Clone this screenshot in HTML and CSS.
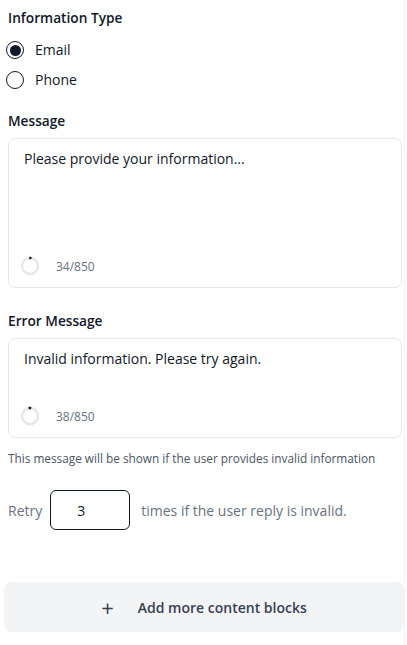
FILE: index.html
```html
<!DOCTYPE html>
<html>
<head>
<meta charset="utf-8">
<link rel="stylesheet" href="styles.css">
</head>
<body>
<div class="panel">
  <section class="group">
    <h3 class="label">Information Type</h3>
    <div class="radios">
      <label class="radio"><span class="dot checked"></span><span>Email</span></label>
      <label class="radio"><span class="dot"></span><span>Phone</span></label>
    </div>
  </section>

  <section class="group msg">
    <h3 class="label">Message</h3>
    <div class="box tall">
      <div class="text">Please provide your information...</div>
      <div class="counter">
        <svg class="ring" width="20" height="20" viewBox="0 0 20 20">
          <circle cx="10" cy="10" r="8" fill="none" stroke="#e5e7eb" stroke-width="2.4"/>
          <circle cx="10" cy="10" r="8" fill="none" stroke="#111827" stroke-width="2.4" stroke-dasharray="2.2 60" transform="rotate(-95 10 10)"/>
        </svg>
        <span>34/850</span>
      </div>
    </div>
  </section>

  <section class="group err">
    <h3 class="label">Error Message</h3>
    <div class="box short">
      <div class="text">Invalid information. Please try again.</div>
      <div class="counter">
        <svg class="ring" width="20" height="20" viewBox="0 0 20 20">
          <circle cx="10" cy="10" r="8" fill="none" stroke="#e5e7eb" stroke-width="2.4"/>
          <circle cx="10" cy="10" r="8" fill="none" stroke="#111827" stroke-width="2.4" stroke-dasharray="2.6 60" transform="rotate(-100 10 10)"/>
        </svg>
        <span>38/850</span>
      </div>
    </div>
    <p class="help">This message will be shown if the user provides invalid information</p>
  </section>

  <div class="retry">
    <span>Retry</span>
    <div class="num">3</div>
    <span>times if the user reply is invalid.</span>
  </div>

  <button class="add"><span class="plus">+</span><span>Add more content blocks</span></button>
</div>
</body>
</html>
```

FILE: styles.css
```css
html, body {
  margin: 0;
  padding: 0;
  background: #ffffff;
}
body {
  font-family: "Open Sans", "Liberation Sans", Arial, sans-serif;
  font-size: 14px;
  color: #111827;
}
.panel {
  width: 404px;
  height: 645px;
  border-right: 1px solid #f1f2f4;
  box-sizing: content-box;
  padding-top: 9px;
}
.group {
  padding: 0 2px 0 8px;
}
.label {
  margin: 0;
  font-size: 13.7px;
  font-weight: 600;
  line-height: 18px;
  color: #111827;
}
.radios {
  display: flex;
  flex-direction: column;
  gap: 12px;
  margin-top: 14px;
  margin-left: -2px;
}
.radio {
  display: flex;
  align-items: center;
  gap: 11px;
  height: 18px;
  line-height: 18px;
}
.dot {
  width: 16px;
  height: 16px;
  border: 1.25px solid #111827;
  border-radius: 50%;
  box-sizing: content-box;
  display: flex;
  align-items: center;
  justify-content: center;
}
.dot.checked::after {
  content: "";
  width: 11px;
  height: 11px;
  border-radius: 50%;
  background: #111827;
}
.msg { margin-top: 23px; }
.box {
  margin-top: 8px;
  border: 1px solid #e5e7eb;
  border-radius: 7px;
  padding: 10px 15px 11px 15px;
  box-sizing: border-box;
  display: flex;
  flex-direction: column;
  justify-content: space-between;
}
.box.tall { height: 150px; }
.box.short { height: 100px; }
.text {
  line-height: 20px;
  color: #111827;
}
.counter {
  display: flex;
  align-items: center;
  gap: 16px;
  margin-left: -4px;
  font-size: 12px;
  color: #6b7280;
}
.ring { display: block; }
.err { margin-top: 24px; }
.help {
  margin: 12px 0 0;
  font-size: 11.8px;
  line-height: 16px;
  color: #4b5563;
}
.retry {
  display: flex;
  align-items: center;
  margin-top: 24px;
  padding-left: 8px;
  color: #6b7280;
  font-size: 14px;
}
.num {
  width: 80px;
  height: 40px;
  box-sizing: border-box;
  border: 1px solid #111827;
  border-radius: 6px;
  margin: 0 11px 0 8px;
  padding-left: 26px;
  display: flex;
  align-items: center;
  color: #111827;
}
.add {
  margin: 52px 0 0 4px;
  width: 400px;
  height: 50px;
  border: none;
  border-radius: 8px;
  background: #f3f4f6;
  display: flex;
  align-items: center;
  justify-content: center;
  gap: 24px;
  font-family: "Open Sans", "Liberation Sans", Arial, sans-serif;
  font-size: 14px;
  font-weight: 600;
  color: #374151;
  padding: 0;
}
.plus {
  font-size: 22px;
  font-weight: 400;
  line-height: 20px;
  color: #374151;
}
```
